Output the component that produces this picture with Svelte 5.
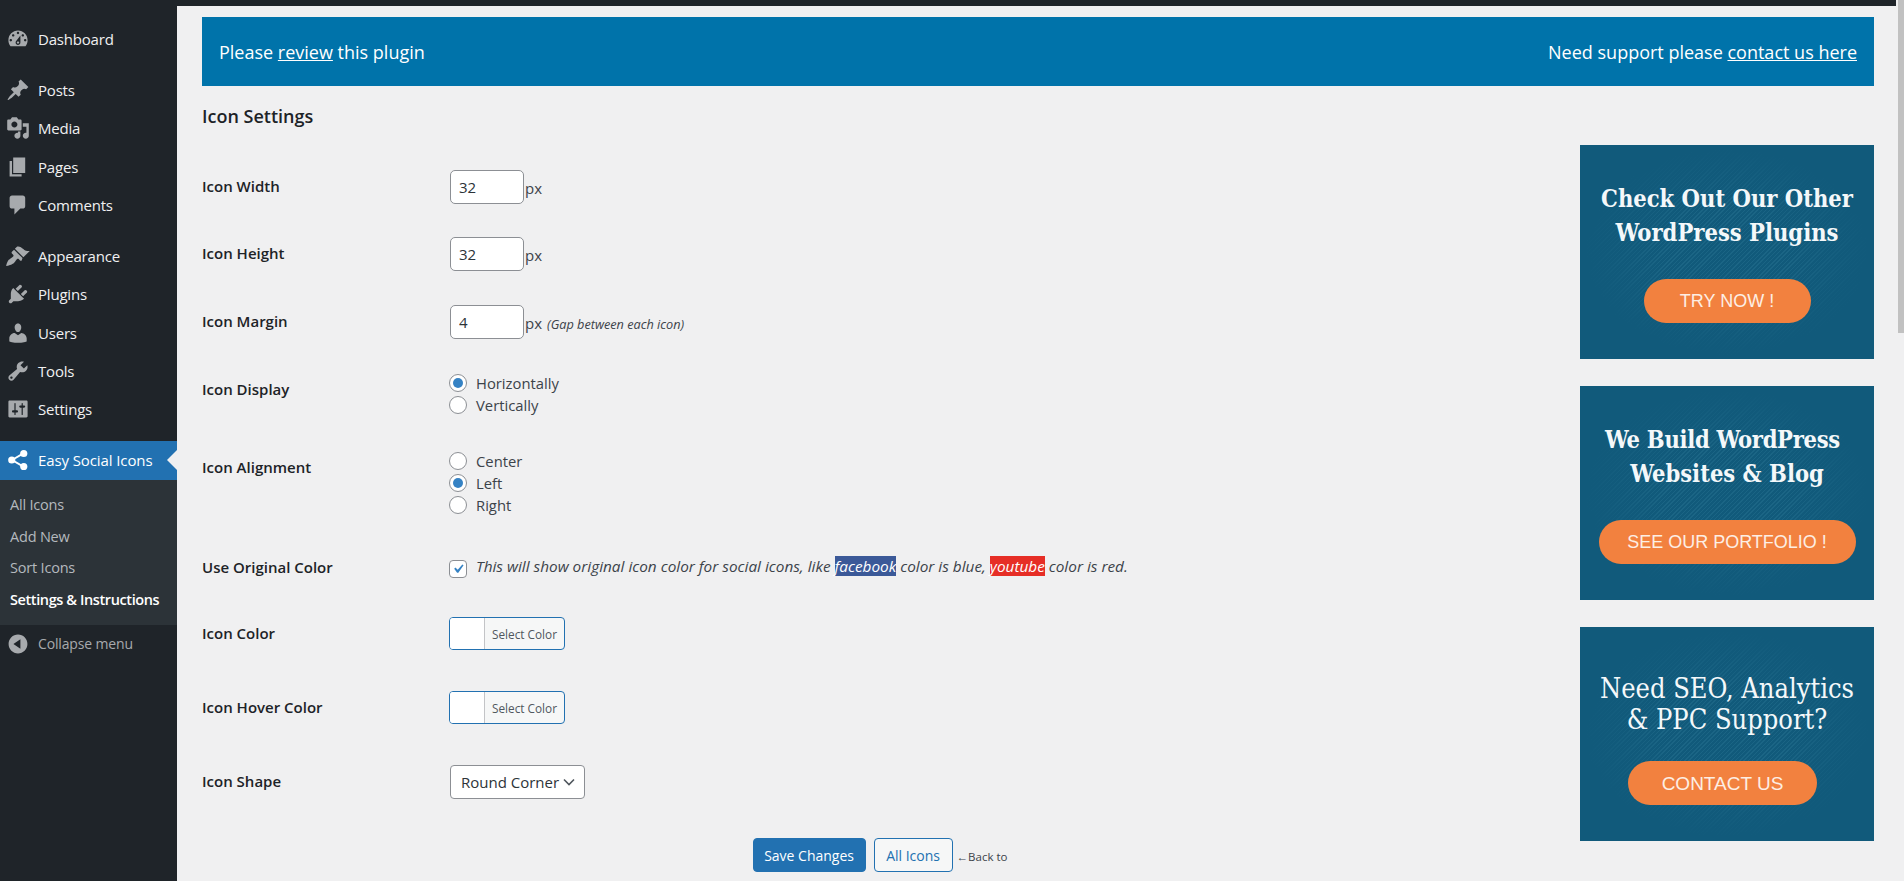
<script lang="ts">
	type MenuItem = { label: string; d: string; gap?: boolean };

	const menu: MenuItem[] = [
		{ label: 'Dashboard', d: 'M3.76 16h12.48c1.1-1.37 1.76-3.11 1.76-5 0-4.42-3.58-8-8-8s-8 3.58-8 8c0 1.89.66 3.63 1.76 5zM10 4c.55 0 1 .45 1 1s-.45 1-1 1-1-.45-1-1 .45-1 1-1zM6 6c.55 0 1 .45 1 1s-.45 1-1 1-1-.45-1-1 .45-1 1-1zm8 0c.55 0 1 .45 1 1s-.45 1-1 1-1-.45-1-1 .45-1 1-1zm-5.37 5.55L12 7v6c0 1.1-.9 2-2 2s-2-.9-2-2c0-.57.24-1.08.63-1.45zM4 10c.55 0 1 .45 1 1s-.45 1-1 1-1-.45-1-1 .45-1 1-1zm12 0c.55 0 1 .45 1 1s-.45 1-1 1-1-.45-1-1 .45-1 1-1zm-5 3c0-.55-.45-1-1-1s-1 .45-1 1 .45 1 1 1 1-.45 1-1z' },
		{ label: 'Posts', gap: true, d: 'M10.44 3.02l1.82-1.82 6.36 6.35-1.83 1.82c-1.05-.68-2.48-.57-3.41.36l-.75.75c-.92.93-1.04 2.35-.35 3.41l-1.83 1.82-2.41-2.41-2.8 2.79c-.42.42-3.38 2.71-3.8 2.29s1.86-3.39 2.28-3.81l2.79-2.79L4.1 9.36l1.83-1.82c1.05.69 2.48.57 3.4-.36l.75-.75c.93-.92 1.05-2.35.36-3.41z' },
		{ label: 'Media', d: 'M13 11V4c0-.55-.45-1-1-1h-1.67L9 1H5L3.67 3H2c-.55 0-1 .45-1 1v7c0 .55.45 1 1 1h10c.55 0 1-.45 1-1zM7 4.5c1.38 0 2.5 1.12 2.5 2.5S8.38 9.5 7 9.5 4.5 8.38 4.5 7 5.62 4.5 7 4.5zM14 6h5v10.5c0 1.38-1.12 2.5-2.5 2.5S14 17.88 14 16.5s1.12-2.5 2.5-2.5c.17 0 .34.02.5.05V9h-3V6zm-4 8.05V13h2v3.5c0 1.38-1.12 2.5-2.5 2.5S7 17.88 7 16.5 8.12 14 9.5 14c.17 0 .34.02.5.05z' },
		{ label: 'Pages', d: 'M6 15V2h10v13H6zm-1 1h8v2H3V5h2v11z' },
		{ label: 'Comments', d: 'M5 2h9c1.1 0 2 .9 2 2v7c0 1.1-.9 2-2 2h-2l-5 5v-5H5c-1.1 0-2-.9-2-2V4c0-1.1.9-2 2-2z' },
		{ label: 'Appearance', gap: true, d: 'M14.48 11.06L7.41 3.99l1.5-1.5c.5-.56 2.3-.47 3.51.32 1.21.8 1.43 1.28 2.91 2.1 1.18.64 2.45 1.26 4.45.85zm-.71.71L6.7 4.7 4.93 6.47c-.39.39-.39 1.02 0 1.41l1.06 1.06c.39.39.39 1.03 0 1.42-.6.6-1.43 1.11-2.21 1.69-.35.26-.7.53-1.01.84C1.43 13.23 0 18.13.22 18.35c.22.22 5.11-1.21 6.45-2.54.31-.31.58-.66.84-1.01.58-.78 1.09-1.61 1.69-2.21.39-.39 1.02-.39 1.41 0l1.06 1.06c.39.39 1.02.39 1.41 0z' },
		{ label: 'Plugins', d: 'M13.11 4.36L9.87 7.6 8 5.72l3.24-3.24c.35-.34 1.05-.2 1.56.32.52.51.66 1.21.31 1.56zm-8 1.77l.91-1.12 9.01 9.01-1.19.84c-.71.71-2.63 1.16-3.82 1.16H6.14L4.9 17.26c-.59.59-1.54.59-2.12 0-.59-.58-.59-1.53 0-2.12l1.24-1.24v-3.88c0-1.13.4-3.19 1.09-3.89zm7.26 3.97l3.24-3.24c.34-.35 1.04-.21 1.55.31.52.51.66 1.21.31 1.55l-3.24 3.25z' },
		{ label: 'Users', d: 'M10 9.25c-2.27 0-2.73-3.44-2.73-3.44C7 4.02 7.82 2 9.97 2c2.16 0 2.98 2.02 2.71 3.81 0 0-.41 3.44-2.68 3.44zm0 2.57L12.72 10c2.39 0 4.52 2.33 4.52 4.53v2.49s-3.65 1.13-7.24 1.13c-3.65 0-7.24-1.13-7.24-1.13v-2.49c0-2.25 1.94-4.48 4.47-4.48z' },
		{ label: 'Tools', d: 'M16.68 9.77c-1.34 1.34-3.3 1.67-4.95.99l-5.41 6.52c-.99.99-2.59.99-3.58 0s-.99-2.59 0-3.57l6.52-5.42c-.68-1.65-.35-3.61.99-4.95 1.28-1.28 3.12-1.62 4.72-1.06l-2.89 2.89 2.82 2.82 2.86-2.87c.53 1.58.18 3.39-1.08 4.65zM3.81 16.21c.4.39 1.04.39 1.43 0 .4-.4.4-1.04 0-1.43-.39-.4-1.03-.4-1.43 0-.39.39-.39 1.03 0 1.43z' },
		{ label: 'Settings', d: 'M18 16V4c0-.55-.45-1-1-1H3c-.55 0-1 .45-1 1v12c0 .55.45 1 1 1h14c.55 0 1-.45 1-1zM8 11h1c.55 0 1 .45 1 1s-.45 1-1 1H8v1.5c0 .28-.22.5-.5.5s-.5-.22-.5-.5V13H6c-.55 0-1-.45-1-1s.45-1 1-1h1V5.5c0-.28.22-.5.5-.5s.5.22.5.5V11zm5-2h-1c-.55 0-1-.45-1-1s.45-1 1-1h1V5.5c0-.28.22-.5.5-.5s.5.22.5.5V7h1c.55 0 1 .45 1 1s-.45 1-1 1h-1v5.5c0 .28-.22.5-.5.5s-.5-.22-.5-.5V9z' },
	];

	const subMenu = ['All Icons', 'Add New', 'Sort Icons'];

	const ads = [
		{ lines: ['Check Out Our Other', 'WordPress Plugins'], cta: 'TRY NOW !', kind: 'one' },
		{ lines: ['We Build WordPress', 'Websites & Blog'], cta: 'SEE OUR PORTFOLIO !', kind: 'two' },
		{ lines: ['Need SEO, Analytics', '& PPC Support?'], cta: 'CONTACT US', kind: 'three' },
	];

	let display = $state('horizontal');
	let alignment = $state('left');
</script>

<div class="admin">
	<aside class="sidebar">
		<nav class="menu">
			{#each menu as item}
				<a href="#top" class="menu-item" class:gap={item.gap}>
					<svg class="menu-icon" viewBox="0 0 20 20" fill-rule="evenodd"><path d={item.d} /></svg>
					<span>{item.label}</span>
				</a>
			{/each}
			<a href="#top" class="menu-item current">
				<svg class="menu-icon" viewBox="0 0 20 20">
					<path d="M5 10L14.5 4.5M5 10l9.5 5.5" stroke="currentColor" stroke-width="1.6" fill="none" />
					<circle cx="4.8" cy="10" r="3" />
					<circle cx="14.8" cy="4.6" r="3" />
					<circle cx="14.8" cy="15.4" r="3" />
				</svg>
				<span>Easy Social Icons</span>
			</a>
			<ul class="submenu">
				{#each subMenu as sub}
					<li><a href="#top">{sub}</a></li>
				{/each}
				<li><a href="#top" class="sub-current">Settings &amp; Instructions</a></li>
			</ul>
			<div class="collapse">
				<svg class="menu-icon" viewBox="0 0 20 20"><path fill-rule="evenodd" d="M10 2.16c4.33 0 7.84 3.51 7.84 7.84s-3.51 7.84-7.84 7.84S2.16 14.33 2.16 10 5.71 2.16 10 2.16zm2 11.72V6.12L6.18 9.97z" /></svg>
				<span>Collapse menu</span>
			</div>
		</nav>
	</aside>

	<main class="content">
		<div class="topbar"></div>
		<div class="wrap">
			<div class="banner">
				<span>Please <a href="#top">review</a> this plugin</span>
				<span>Need support please <a href="#top">contact us here</a></span>
			</div>

			<div class="columns">
				<section class="settings">
					<h2>Icon Settings</h2>
					<form class="form">
						<div class="label">Icon Width</div>
						<div class="field"><input class="num" type="text" value="32" /><span class="unit">px</span></div>

						<div class="label">Icon Height</div>
						<div class="field"><input class="num" type="text" value="32" /><span class="unit">px</span></div>

						<div class="label">Icon Margin</div>
						<div class="field">
							<input class="num" type="text" value="4" /><span class="unit">px</span>
							<em class="hint">(Gap between each icon)</em>
						</div>

						<div class="label">Icon Display</div>
						<div class="options">
							<label><input type="radio" bind:group={display} value="horizontal" />Horizontally</label>
							<label><input type="radio" bind:group={display} value="vertical" />Vertically</label>
						</div>

						<div class="label">Icon Alignment</div>
						<div class="options">
							<label><input type="radio" bind:group={alignment} value="center" />Center</label>
							<label><input type="radio" bind:group={alignment} value="left" />Left</label>
							<label><input type="radio" bind:group={alignment} value="right" />Right</label>
						</div>

						<div class="label tight">Use Original Color</div>
						<div class="check">
							<label class="check-box">
								<input type="checkbox" checked />
								<svg viewBox="0 0 20 20"><path d="M14.83 4.89l1.34.94-5.81 8.38H9.02L5.78 9.67l1.34-1.25 2.57 2.4z" /></svg>
							</label>
							<em>This will show original icon color for social icons, like <mark class="fb">facebook</mark> color is blue, <mark class="yt">youtube</mark> color is red.</em>
						</div>

						<div class="label">Icon Color</div>
						<div><button type="button" class="color-btn"><span class="swatch"></span><span class="color-text">Select Color</span></button></div>

						<div class="label">Icon Hover Color</div>
						<div><button type="button" class="color-btn"><span class="swatch"></span><span class="color-text">Select Color</span></button></div>

						<div class="label">Icon Shape</div>
						<div>
							<select class="shape">
								<option>Round Corner</option>
							</select>
						</div>
					</form>

					<div class="actions">
						<button type="button" class="primary">Save Changes</button>
						<button type="button" class="secondary">All Icons</button>
						<span class="back">←Back to</span>
					</div>
				</section>

				<aside class="ads">
					{#each ads as ad}
						<div class="ad {ad.kind}">
							<div class="ad-title">
								{#each ad.lines as line}
									<div>{line}</div>
								{/each}
							</div>
							<div class="ad-cta">{ad.cta}</div>
						</div>
					{/each}
				</aside>
			</div>
		</div>
	</main>

	<div class="scroll-thumb"></div>
</div>

<style>
	:global(body) {
		margin: 0;
		background: #f0f0f1;
	}

	.admin {
		display: flex;
		height: 881px;
		overflow: hidden;
		font-family: 'Open Sans', 'Noto Sans', sans-serif;
		font-size: 14px;
		color: #3c434a;
	}

	/* ── Sidebar ── */
	.sidebar {
		width: 177px;
		flex-shrink: 0;
		background: #1f2429;
	}

	.menu {
		display: flex;
		flex-direction: column;
		padding-top: 20px;
	}

	.menu-item {
		display: flex;
		align-items: center;
		height: 38.4px;
		color: #f0f0f1;
		text-decoration: none;
		font-size: 15px;
		letter-spacing: -0.2px;
		position: relative;
	}

	.menu-item.gap {
		margin-top: 12.4px;
	}

	.menu-icon {
		width: 24px;
		height: 24px;
		margin: 0 8px 0 6px;
		flex-shrink: 0;
		fill: #a7aaad;
	}

	.menu-item.current {
		margin-top: 12.2px;
		height: 39px;
		background: #2271b1;
		color: #fff;
		letter-spacing: -0.1px;
	}

	.menu-item.current .menu-icon {
		fill: #fff;
		color: #fff;
	}

	.menu-item.current::after {
		content: '';
		position: absolute;
		right: 0;
		top: 50%;
		margin-top: -10px;
		border: 10px solid transparent;
		border-right-color: #f0f0f1;
		border-left-width: 0;
	}

	.submenu {
		list-style: none;
		margin: 0;
		padding: 9px 0 10px;
		background: #2c3338;
		font-size: 14.5px;
	}

	.submenu li {
		height: 31.5px;
		display: flex;
		align-items: center;
		padding-left: 10px;
	}

	.submenu a {
		color: #b4b9be;
		text-decoration: none;
		letter-spacing: -0.2px;
	}

	.submenu a.sub-current {
		color: #fff;
		font-weight: 600;
		letter-spacing: -0.4px;
	}

	.collapse {
		display: flex;
		align-items: center;
		height: 38px;
		margin-top: 0;
		color: #a7aaad;
		font-size: 14px;
		letter-spacing: -0.15px;
	}

	/* ── Content ── */
	.content {
		flex: 1;
		min-width: 0;
		display: flex;
		flex-direction: column;
	}

	.topbar {
		height: 6px;
		background: #1f2429;
		margin-right: 8px;
		flex-shrink: 0;
	}

	.wrap {
		padding: 11px 30px 0 25px;
	}

	.banner {
		height: 69px;
		background: #0073aa;
		color: #fff;
		display: flex;
		align-items: center;
		justify-content: space-between;
		padding: 0 17px;
		font-size: 18px;
	}

	.banner a {
		color: #fff;
	}

	.columns {
		display: flex;
		justify-content: space-between;
	}

	.settings {
		width: 1356px;
	}

	h2 {
		margin: 19px 0 0;
		font-size: 18px;
		line-height: 23px;
		font-weight: 600;
		color: #1d2327;
	}

	.form {
		display: grid;
		grid-template-columns: 248px 1fr;
		grid-template-rows: 67px 68px 68px 78px 109px 57px 74px 74px 73px;
		margin-top: 42px;
	}

	.label {
		padding-top: 6px;
		font-size: 15px;
		font-weight: 600;
		line-height: 20px;
		color: #1d2327;
	}

	.label.tight {
		padding-top: 0;
		margin-top: -3px;
	}

	.field {
		display: flex;
		align-items: flex-start;
	}

	.num {
		width: 74px;
		height: 34px;
		box-sizing: border-box;
		padding: 0 8px;
		border: 1px solid #8c8f94;
		border-radius: 5px;
		background: #fff;
		font: inherit;
		font-size: 15px;
		color: #2c3338;
	}

	.unit {
		margin: 8px 0 0 1px;
		font-size: 15px;
		line-height: 20px;
	}

	.hint {
		margin: 9px 0 0 5px;
		font-size: 12.7px;
		line-height: 20px;
	}

	.options {
		display: flex;
		flex-direction: column;
		gap: 3px;
		margin-left: -1px;
	}

	.options label {
		display: flex;
		align-items: center;
		height: 19px;
		font-size: 14.8px;
	}

	.options input {
		appearance: none;
		width: 18px;
		height: 18px;
		margin: 0 9px 0 0;
		border: 1px solid #8c8f94;
		border-radius: 50%;
		background: #fff;
		box-sizing: border-box;
		display: grid;
		place-items: center;
		flex-shrink: 0;
	}

	.options input:checked::before {
		content: '';
		width: 10px;
		height: 10px;
		border-radius: 50%;
		background: #3582c4;
	}

	.check {
		display: flex;
		align-items: flex-start;
		margin-left: -1px;
		font-size: 15.35px;
	}

	.check-box {
		position: relative;
		width: 18px;
		height: 18px;
		margin-right: 9px;
		flex-shrink: 0;
	}

	.check-box input {
		appearance: none;
		display: block;
		width: 18px;
		height: 18px;
		margin: 0;
		border: 1px solid #8c8f94;
		border-radius: 4px;
		background: #fff;
		box-sizing: border-box;
	}

	.check-box svg {
		position: absolute;
		inset: 0;
		width: 18px;
		height: 18px;
		fill: #3582c4;
	}

	.check em {
		margin-top: -4px;
		line-height: 21px;
	}

	mark {
		color: #fff;
		padding: 0;
	}

	.fb {
		background: #3b5998;
	}

	.yt {
		background: #e62e26;
	}

	.color-btn {
		display: flex;
		align-items: stretch;
		width: 116px;
		height: 33px;
		margin: 0 0 0 -1px;
		padding: 0;
		border: 1px solid #2271b1;
		border-radius: 4px;
		background: #f6f7f7;
		overflow: hidden;
		font: inherit;
	}

	.swatch {
		width: 34px;
		background: #fff;
		border-right: 1px solid #c3c4c7;
	}

	.color-text {
		flex: 1;
		align-self: center;
		font-size: 11.8px;
		color: #50575e;
		text-align: center;
	}

	.shape {
		appearance: none;
		width: 135px;
		height: 34px;
		padding: 0 0 0 10px;
		border: 1px solid #8c8f94;
		border-radius: 4px;
		background: #fff url("data:image/svg+xml,%3Csvg xmlns='http://www.w3.org/2000/svg' viewBox='0 0 12 8'%3E%3Cpath d='M1 1.5l5 5 5-5' fill='none' stroke='%2350575e' stroke-width='1.6'/%3E%3C/svg%3E") no-repeat right 9px center / 12px 8px;
		font: inherit;
		font-size: 15px;
		color: #2c3338;
	}

	.actions {
		display: flex;
		justify-content: center;
		align-items: center;
		height: 34px;
	}

	.primary,
	.secondary {
		height: 34px;
		box-sizing: border-box;
		border: 1px solid #2271b1;
		border-radius: 4px;
		font: inherit;
		font-size: 14px;
		padding: 0;
	}

	.primary {
		width: 113px;
		background: #2271b1;
		color: #fff;
	}

	.secondary {
		width: 79px;
		margin-left: 8px;
		background: #f6f7f7;
		color: #2271b1;
	}

	.back {
		margin: 2px 0 0 4px;
		font-size: 11.5px;
	}

	/* ── Ads ── */
	.ads {
		width: 294px;
		margin-top: 59px;
		display: flex;
		flex-direction: column;
		gap: 27px;
		flex-shrink: 0;
	}

	.ad {
		height: 214px;
		box-sizing: border-box;
		padding-top: 37px;
		display: flex;
		flex-direction: column;
		align-items: center;
		color: #f4f8fa;
		background-color: #115a7b;
		background-image: radial-gradient(ellipse at center, transparent 30%, #115a7b 68%), repeating-linear-gradient(135deg, #1b6585 0 1px, #115a7b 1px 3px);
	}

	.ad-title {
		font-family: 'DejaVu Serif Condensed', 'DejaVu Serif', serif;
		font-stretch: condensed;
		font-weight: 700;
		font-size: 23.5px;
		line-height: 34px;
		text-align: center;
		white-space: nowrap;
	}

	.two .ad-title div:first-child {
		margin-right: 9px;
		letter-spacing: -0.3px;
	}

	.ad-cta {
		height: 44px;
		margin-top: 29px;
		border-radius: 22px;
		background: #f2813f;
		color: #fdeee4;
		font-family: 'Liberation Sans', Arial, sans-serif;
		font-size: 18px;
		line-height: 45px;
		text-align: center;
		white-space: nowrap;
	}

	.one .ad-cta {
		width: 167px;
	}

	.two .ad-cta {
		width: 257px;
	}

	.three {
		padding-top: 46px;
	}

	.three .ad-title {
		font-weight: 400;
		font-size: 27px;
		line-height: 31px;
	}

	.three .ad-cta {
		width: 189px;
		margin: 26px 9px 0 0;
		font-size: 19px;
	}

	.scroll-thumb {
		position: absolute;
		top: 0;
		right: 0;
		width: 6px;
		height: 333px;
		background: #c1c1c1;
	}
</style>
